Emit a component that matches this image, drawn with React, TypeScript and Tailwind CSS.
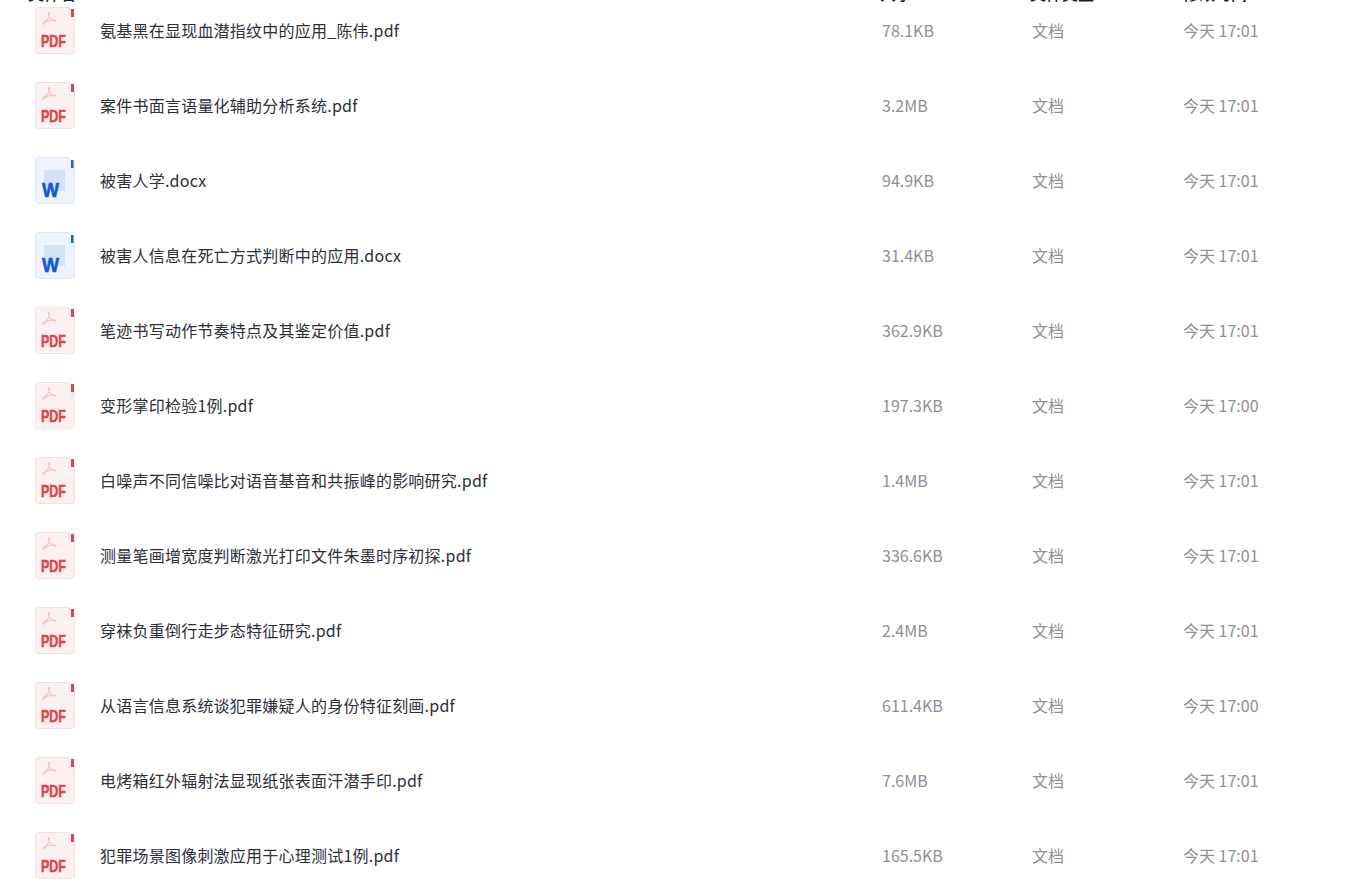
const rows = [
  { name: "氨基黑在显现血潜指纹中的应用_陈伟.pdf", size: "78.1KB", time: "今天 17:01" },
  { name: "案件书面言语量化辅助分析系统.pdf", size: "3.2MB", time: "今天 17:01" },
  { name: "被害人学.docx", size: "94.9KB", time: "今天 17:01" },
  { name: "被害人信息在死亡方式判断中的应用.docx", size: "31.4KB", time: "今天 17:01" },
  { name: "笔迹书写动作节奏特点及其鉴定价值.pdf", size: "362.9KB", time: "今天 17:01" },
  { name: "变形掌印检验1例.pdf", size: "197.3KB", time: "今天 17:00" },
  { name: "白噪声不同信噪比对语音基音和共振峰的影响研究.pdf", size: "1.4MB", time: "今天 17:01" },
  { name: "测量笔画增宽度判断激光打印文件朱墨时序初探.pdf", size: "336.6KB", time: "今天 17:01" },
  { name: "穿袜负重倒行走步态特征研究.pdf", size: "2.4MB", time: "今天 17:01" },
  { name: "从语言信息系统谈犯罪嫌疑人的身份特征刻画.pdf", size: "611.4KB", time: "今天 17:00" },
  { name: "电烤箱红外辐射法显现纸张表面汗潜手印.pdf", size: "7.6MB", time: "今天 17:01" },
  { name: "犯罪场景图像刺激应用于心理测试1例.pdf", size: "165.5KB", time: "今天 17:01" },
];

const PdfIcon = () => (
  <svg width="40" height="47" viewBox="0 0 40 47" fill="none">
    <path d="M3.500.5h30l6 6v37a3 3 0 0 1-3 3h-33a3 3 0 0 1-3-3v-40a3 3 0 0 1 3-3Z" fill="#fcf1f1" stroke="#f7dfdf" />
    <rect x="36" y="2" width="3" height="8" fill="#e0474d" />
    <path d="M8 16c3.500-2 6.500-5.500 6.500-9.500 0-1.500-1-1.500-1 0 0 4 3 7 6 7.500 1.500.2 1.500-.8.300-1-4-.5-8 1-11.300 3.500-.8.600-.2 1 .5.500Z" stroke="#f6c6c7" strokeWidth="1.200" />
    <text x="6" y="40" fontFamily="'Liberation Sans', sans-serif" fontWeight="700" fontSize="17" fill="#e0434a" stroke="#e0434a" strokeWidth="0.5" textLength="25" lengthAdjust="spacingAndGlyphs">PDF</text>
  </svg>
);

const WordIcon = () => (
  <svg width="40" height="47" viewBox="0 0 40 47" fill="none">
    <path d="M3.500.5h30l6 6v37a3 3 0 0 1-3 3h-33a3 3 0 0 1-3-3v-40a3 3 0 0 1 3-3Z" fill="#eff4fc" stroke="#dbe6f7" />
    <rect x="36" y="3" width="2.500" height="8" fill="#1a62d6" />
    <rect x="9" y="13" width="21" height="21" fill="#d5e2f6" />
    <text x="7" y="40" fontFamily="'Liberation Sans', sans-serif" fontWeight="700" fontSize="20" fill="#0f5bd2" stroke="#0f5bd2" strokeWidth="0.6" textLength="17" lengthAdjust="spacingAndGlyphs">W</text>
  </svg>
);

export default function App() {
  return (
    <div className="h-screen overflow-hidden bg-white font-['Noto_Sans_CJK_SC','Noto_Sans',sans-serif] text-[16px]">
      <div className="-mt-[21px]">
        <div className="flex h-[28px] items-center font-medium text-[#1f2029]">
          <div className="mr-[18px] h-[14px] w-[10px] rounded-[2px] border border-[#d8d8de]" />
          <div className="w-[852px]">文件名</div>
          <div className="w-[150px]">大小</div>
          <div className="w-[153px]">文件类型</div>
          <div>修改时间</div>
        </div>
        <div className="-mt-[14.500px]">
          {rows.map((row) => (
            <div key={row.name} className="flex h-[75px] items-center">
              <div className="ml-[35px] flex w-[65px] shrink-0">
                {row.name.endsWith(".docx") ? <WordIcon /> : <PdfIcon />}
              </div>
              <div className="w-[782px] shrink-0 tracking-[0.23px] text-[#2c2f3a]">{row.name}</div>
              <div className="w-[150px] shrink-0 text-[#8f8f9a]">{row.size}</div>
              <div className="w-[151px] shrink-0 text-[#8f8f9a]">文档</div>
              <div className="text-[#8f8f9a]">{row.time}</div>
            </div>
          ))}
        </div>
      </div>
    </div>
  );
}
